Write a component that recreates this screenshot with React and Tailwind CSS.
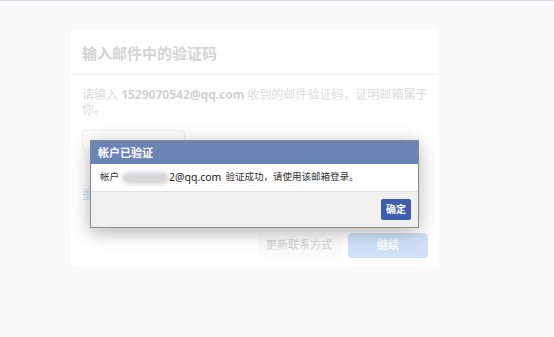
export default function App() {
    const font = { fontFamily: '"Noto Sans", "Noto Sans CJK SC", sans-serif' };
    return (
        <div className="relative h-[337px] w-[554px] overflow-hidden border-t border-[#d5dae5] bg-[#fafafa]" style={font}>
            {/* faded page behind the dialog */}
            <div className="ml-[71px] mt-[29px] w-[368px] rounded-[5px] bg-white">
                <div className="border-b border-[#f5f5f5] px-[11px] pb-[10px] pt-[12px]">
                    <h1 className="text-[15px] font-bold leading-[22px] text-[#d4d4d4]">输入邮件中的验证码</h1>
                </div>
                <div className="px-[11px] pt-[12px]">
                    <p className="text-[12px] leading-[15px] text-[#dcdcdc]">
                        <span className="whitespace-nowrap">
                            请输入 <b className="text-[#d2d2d2]">1529070542@qq.com</b> 收到的邮件验证码，证明邮箱属于
                        </span>
                        <br />
                        你。
                    </p>
                    <div className="mt-[13px] h-[21px] w-[103px] rounded-[4px] border border-[#f0f0f0]" />
                    <p className="mt-[37px] text-[11px] leading-[14px] text-[#d6e2f4]">重新发送</p>
                    <div className="mt-[31px] flex justify-end gap-[7px] pb-[9px]">
                        <button className="h-[25px] w-[84px] rounded-[4px] bg-[#fafbfa] text-[11px] text-[#d4d4d4]">更新联系方式</button>
                        <button className="h-[25px] w-[80px] rounded-[4px] bg-[#d0e1f7] text-[11px] font-bold text-white">继续</button>
                    </div>
                </div>
            </div>

            {/* alert dialog */}
            <div className="absolute left-[90px] top-[139px] w-[329px] border border-[#8a8a8a] bg-[#f0f0f0] shadow-[0_4px_18px_rgba(0,0,0,0.3)]">
                <div className="h-[23px] bg-[#6b84b6] px-[7px] text-[11px] font-bold leading-[23px] text-white">帐户已验证</div>
                <div className="flex h-[27px] items-center bg-white px-[9px] text-[9.5px] text-[#333]">
                    <span>帐户</span>
                    <span className="ml-[3px] h-[12px] w-[47px] rounded-full bg-[#d6d6d6] blur-[2px]" />
                    <span className="text-[10.5px] text-[#222]">2@qq.com</span>
                    <span className="ml-[4px]">验证成功，请使用该邮箱登录。</span>
                </div>
                <div className="flex h-[36px] items-center justify-end border-t border-[#e2e2e2] pr-[7px]">
                    <button className="h-[21px] w-[30px] rounded-[2px] bg-[#3d5fae] text-[10px] font-bold text-white">确定</button>
                </div>
            </div>
        </div>
    );
}
